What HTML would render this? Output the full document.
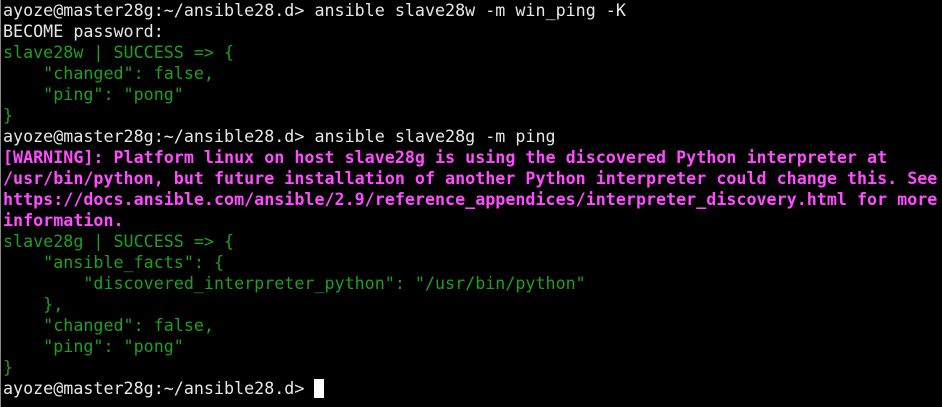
<!DOCTYPE html><html><head><style>
html,body{margin:0;padding:0;background:#000;width:942px;height:407px;overflow:hidden}
pre{margin:0;position:absolute;left:3px;top:0px;font-family:"DejaVu Sans Mono","Liberation Mono",monospace;font-size:16.7px;line-height:21px;color:#e8e8e8;white-space:pre}
.g{color:#1ea01e}.m{color:#ff4cff;font-weight:bold}
.c{display:inline-block;width:10px;height:19px;background:#fff;vertical-align:-4px}
</style></head><body><div style="position:absolute;left:0;top:0;width:1px;height:407px;background:#888"></div><pre>ayoze@master28g:~/ansible28.d&gt; ansible slave28w -m win_ping -K
BECOME password:
<span class="g">slave28w | SUCCESS =&gt; {
    "changed": false,
    "ping": "pong"
}</span>
ayoze@master28g:~/ansible28.d&gt; ansible slave28g -m ping
<span class="m">[WARNING]: Platform linux on host slave28g is using the discovered Python interpreter at
/usr/bin/python, but future installation of another Python interpreter could change this. See
https://docs.ansible.com/ansible/2.9/reference_appendices/interpreter_discovery.html for more
information.</span>
<span class="g">slave28g | SUCCESS =&gt; {
    "ansible_facts": {
        "discovered_interpreter_python": "/usr/bin/python"
    },
    "changed": false,
    "ping": "pong"
}</span>
ayoze@master28g:~/ansible28.d&gt; <span class="c"></span></pre></body></html>
